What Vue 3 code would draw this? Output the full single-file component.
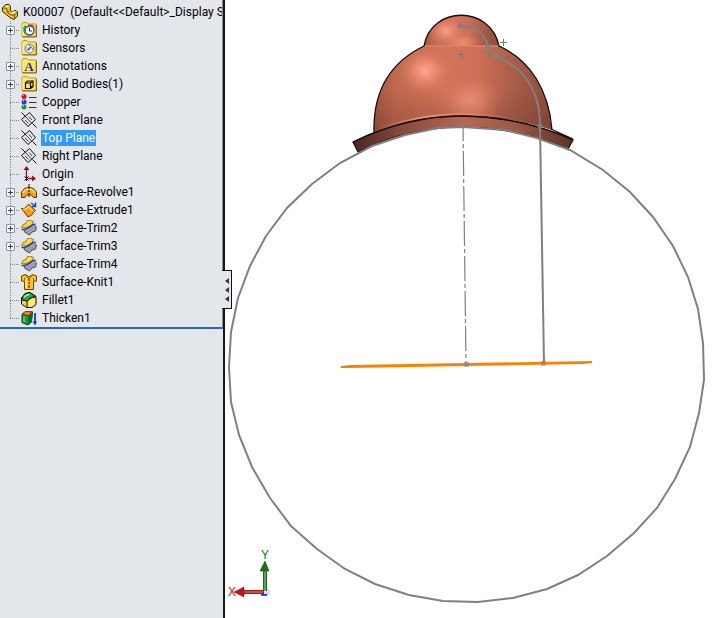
<script setup>
import { ref } from 'vue'

const features = [
  { name: 'History', icon: 'history', expandable: true },
  { name: 'Sensors', icon: 'sensors' },
  { name: 'Annotations', icon: 'annotations', expandable: true },
  { name: 'Solid Bodies(1)', icon: 'bodies', expandable: true },
  { name: 'Copper', icon: 'material' },
  { name: 'Front Plane', icon: 'plane' },
  { name: 'Top Plane', icon: 'plane' },
  { name: 'Right Plane', icon: 'plane' },
  { name: 'Origin', icon: 'origin' },
  { name: 'Surface-Revolve1', icon: 'revolve', expandable: true },
  { name: 'Surface-Extrude1', icon: 'extrude', expandable: true },
  { name: 'Surface-Trim2', icon: 'trim', expandable: true },
  { name: 'Surface-Trim3', icon: 'trim', expandable: true },
  { name: 'Surface-Trim4', icon: 'trim' },
  { name: 'Surface-Knit1', icon: 'knit' },
  { name: 'Fillet1', icon: 'fillet' },
  { name: 'Thicken1', icon: 'thicken' }
]

const folders = ['history', 'sensors', 'annotations', 'bodies']
const selected = ref('Top Plane')
</script>

<template>
  <div class="workspace">
    <aside class="panel">
      <nav class="tree" aria-label="Feature tree">
        <div class="root">
          <svg class="icon" viewBox="0 0 16 16" aria-hidden="true">
            <path d="M.5 3.500 4 .5h3l1.500 2v4l2 1.500 2-1.500h1.500l1.500 1.500v4L12 15.500 8.500 14 .5 7.500z" fill="#f2c51c" stroke="#3d2c00" stroke-linejoin="round" />
            <path d="M1.500 4 4.500 1.500H7L5 4z M8.500 10l3-2.500h2.500l-2 2.500z" fill="#fff3a0" />
            <path d="M1 4h3.500l1 4.500L9 11h3.500L15 8.500M12.500 11v4M5.500 8.500 7.500 7" fill="none" stroke="#6b4d00" />
          </svg>
          <span class="label">K00007&nbsp; (Default&lt;&lt;Default&gt;_Display S</span>
        </div>
        <ul class="features">
          <li v-for="f in features" :key="f.name" class="feature">
            <span class="branch">
              <button v-if="f.expandable" class="expander" type="button" :aria-label="'Expand ' + f.name"></button>
            </span>
            <svg class="icon" viewBox="0 0 16 16" aria-hidden="true">
              <g v-if="folders.includes(f.icon)">
                <path d="M1 3V1.500L2 .5h4L7.500 2H15v12.500H1z" fill="#ffe35c" stroke="#c79a16" />
                <path d="M2 13.500V3.500h12" fill="none" stroke="#fff6b0" />
                <path d="M1.500 15h14V3" fill="none" stroke="#8c6708" />
              </g>
              <g v-if="f.icon === 'history'">
                <circle cx="8.500" cy="8.500" r="4.500" fill="#fff" stroke="#2c50a8" stroke-width="1.500" />
                <path d="M4.500 11A5 5 0 0 1 4 5.500" fill="none" stroke="#16a038" stroke-width="2" />
                <path d="M1.500 6.500 4 3l3 3z" fill="#18b040" />
                <path d="M7 3.500q4-1.500 6 2" fill="none" stroke="#d33" stroke-width="1.500" />
                <path d="M8.500 5.500V9H11" fill="none" stroke="#223" />
              </g>
              <g v-else-if="f.icon === 'sensors'">
                <circle cx="8.500" cy="8.500" r="4.500" fill="#e8f1f7" stroke="#68798a" />
                <path d="m6.500 10.500 4-4M5.500 8h1M8.500 5v1M11 9h1" stroke="#174f79" stroke-width="1.200" />
              </g>
              <text v-else-if="f.icon === 'annotations'" x="8" y="13" class="glyph">A</text>
              <g v-else-if="f.icon === 'bodies'" fill="none" stroke="#111" stroke-width="1.200">
                <path d="M4.500 7h5v5.500h-5zM6.500 5h5.500v5.500H9.500M4.500 7l2-2M9.500 7 12 5M9.500 12.500l2.500-2" />
              </g>
              <g v-else-if="f.icon === 'material'">
                <circle cx="3" cy="2.500" r="2.500" fill="#e01020" />
                <circle cx="3" cy="8" r="2.500" fill="#2838d0" />
                <circle cx="3" cy="13" r="2.500" fill="#169040" />
                <path d="M2 1.500h1M2 7h1M2 12h1" stroke="#fff" />
                <path d="M8 3.500h7.500M8 8.500h7.500M8 13.500h7.500" stroke="#333" />
              </g>
              <g v-else-if="f.icon === 'plane'" fill="none" stroke="#111">
                <path d="M8.500.5 14.500 7.500 7 14.500.5 7.500zM.5.5l4 4M11.500 11.500l4 4" />
                <path d="M4.500 4.500l6.500 7M8 4.500 11 8M4 8l3.500 3.500" stroke-width=".8" />
              </g>
              <g v-else-if="f.icon === 'origin'">
                <path d="M5.500 11V2M7 12.500h6" stroke="#a00c18" stroke-width="1.300" />
                <path d="m5.500 0 3 4h-6zM15 12.500l-4-3v6z" fill="#a00c18" />
                <path d="m3.500 10.500 4 4m0-4-4 4M5.500 10v5" stroke="#111" />
              </g>
              <g v-else-if="f.icon === 'revolve'">
                <path d="M.5 9Q2 3.500 8 3.500T15.500 9v4.500h-3Q11 10.500 8 10.500T4 13.500H.5z" fill="#f5a416" stroke="#5e3200" />
                <path d="M2 9q2-4 6-4t6 4" fill="none" stroke="#ffe06a" stroke-width="1.500" />
                <path d="M8 0v5M8 6v2M8 9v4" stroke="#111" />
              </g>
              <g v-else-if="f.icon === 'extrude'">
                <path d="M.5 6.500q4 1 5.500-3l2-1 6.500 6-2 2q-1 3-5.500 4.500z" fill="#f59c12" stroke="#6b3b00" />
                <path d="M2 7.500q4 0 5-3l4.500 4" fill="none" stroke="#ffd652" stroke-width="1.500" />
                <path d="m10 1 4 3M14.500.5V4.500H11" fill="none" stroke="#1a48d8" stroke-width="1.500" />
              </g>
              <g v-else-if="f.icon === 'trim'">
                <path d="M3 10 8 7.500l4-3.500 3.500 3-1 4-3.500 1-2.500 3L3.500 12z" fill="#9da1a8" stroke="#4b5057" />
                <path d="m.5 8 1.500-3.500 3-1 1.500-3 2.500-.5 3.500 1.500L11 5 5.500 7.500z" fill="#fbd82f" stroke="#806000" stroke-width=".8" />
                <path d="M.5 9.500Q4 10 7 8t5-3.500l3-.5" fill="none" stroke="#2a2fd0" stroke-width="1.200" />
                <path d="m6 3.500 2.500-1.500" stroke="#fff6a8" />
              </g>
              <g v-else-if="f.icon === 'knit'">
                <path d="m.5 2 4-1.500L8 3l3.500-2.500 4 1.500v5l-3 .5v8h-9v-8l-3-.5z" fill="#f8c51d" stroke="#5f4300" />
                <path d="m4.500 1 3.500 4 3.500-4M3.500 4v4M12.500 4v4" fill="none" stroke="#9b6500" />
                <path d="M8 5v2M8 8v2M8 11v3" stroke="#e34c0d" stroke-width="2" />
                <path d="M5 5v9" stroke="#fff06e" stroke-width="1.500" />
              </g>
              <g v-else-if="f.icon === 'fillet'">
                <path d="M.5 6 4 1.500 9 .5l6 4v8L11 15.500H5.500L.5 12z" fill="#f9d334" stroke="#111" />
                <path d="M.5 8Q2 1 9 .5l6 4Q9 5 6 9z" fill="#20a843" stroke="#111" />
                <path d="M3 5.500Q5 2.500 8.500 2.500" fill="none" stroke="#9af0a4" stroke-width="1.500" />
                <path d="M6 9q3-4 9-4.500M6 9v6.500" fill="none" stroke="#111" />
                <path d="M7.500 9.500q2.500-3 6.500-3.500v6l-3.500 2.500h-3z" fill="#ffed70" />
              </g>
              <g v-else>
                <path d="M1 4.500 4.500 2h7l-1 10-3.500 3L1 12.500z" fill="#1d9b3a" stroke="#0b3015" />
                <path d="m1 4 3.500-2.500 7 .5-4 3.500z" fill="#f78c1c" stroke="#8c2b00" />
                <path d="m7 6 4-3v9l-4 2.500z" fill="#0d6b25" />
                <path d="M3 6.500V12" stroke="#6fdb78" stroke-width="1.500" />
                <path d="M14 3v9" stroke="#174fd2" stroke-width="2" />
                <path d="m11.500 11.500 2.500 4 2-4z" fill="#123fb0" />
              </g>
            </svg>
            <a href="#" class="label" :class="{ selected: selected === f.name }" @click.prevent="selected = f.name">{{ f.name }}</a>
          </li>
        </ul>
      </nav>
      <button class="collapse" type="button" aria-label="Collapse panel">
        <svg viewBox="0 0 4 26" aria-hidden="true">
          <path d="M4 1v6L0 4zM4 10v6l-4-3zM4 19v6l-4-3z" fill="#33363b" />
        </svg>
      </button>
    </aside>

    <main class="viewport">
      <svg class="model" viewBox="225 0 494 618" preserveAspectRatio="xMinYMin meet" role="img" aria-label="Copper dome model">
        <defs>
          <linearGradient id="body" x1="0" x2="1" y1="0" y2="0">
            <stop offset="0" stop-color="#a4553f" />
            <stop offset=".12" stop-color="#c0694f" />
            <stop offset=".4" stop-color="#d3745a" />
            <stop offset=".6" stop-color="#cb6f56" />
            <stop offset=".8" stop-color="#a65c48" />
            <stop offset="1" stop-color="#8c4c3b" />
          </linearGradient>
          <linearGradient id="shade" x1="0" x2="0" y1="0" y2="1">
            <stop offset=".5" stop-color="#6b3326" stop-opacity="0" />
            <stop offset="1" stop-color="#6b3326" stop-opacity=".4" />
          </linearGradient>
          <linearGradient id="rim" x1="0" x2="1" y1="0" y2="0">
            <stop offset="0" stop-color="#4b261e" />
            <stop offset=".2" stop-color="#84473a" />
            <stop offset=".5" stop-color="#b76852" />
            <stop offset=".75" stop-color="#9b5746" />
            <stop offset="1" stop-color="#5e3126" />
          </linearGradient>
          <radialGradient id="glow">
            <stop offset="0" stop-color="#ffa58b" />
            <stop offset=".4" stop-color="#f3937a" stop-opacity=".75" />
            <stop offset="1" stop-color="#dd7c61" stop-opacity="0" />
          </radialGradient>
          <linearGradient id="seam" x1="0" x2="1" y1="0" y2="0">
            <stop offset="0" stop-color="#f0906f" stop-opacity="0" />
            <stop offset=".3" stop-color="#f0906f" />
            <stop offset="1" stop-color="#f0906f" stop-opacity="0" />
          </linearGradient>
          <clipPath id="dome-clip">
            <path d="M374 132C373 88 393 61 424 46L500 46C530 60 549 90 552 130Q510 116 462 116T374 132" />
          </clipPath>
          <clipPath id="cap-clip">
            <path d="M424 46C431 5 491 5 499 46z" />
          </clipPath>
        </defs>

        <path d="M374 132C373 88 393 61 424 46L500 46C530 60 549 90 552 130Q510 116 462 116T374 132" fill="url(#body)" />
        <path d="M374 132C373 88 393 61 424 46L500 46C530 60 549 90 552 130Q510 116 462 116T374 132" fill="url(#shade)" />
        <g clip-path="url(#dome-clip)">
          <ellipse cx="425" cy="71" rx="26" ry="23" fill="url(#glow)" />
          <ellipse cx="470" cy="101" rx="32" ry="25" fill="url(#glow)" opacity=".6" />
          <path d="M380 128Q424 114 462 114Q490 114 520 120" fill="none" stroke="url(#seam)" stroke-width="2" />
        </g>
        <path d="M424 46C431 5 491 5 499 46z" fill="url(#body)" />
        <g clip-path="url(#cap-clip)">
          <ellipse cx="446" cy="31" rx="18" ry="15" fill="url(#glow)" opacity=".85" />
          <ellipse cx="463" cy="43" rx="18" ry="11" fill="url(#glow)" opacity=".6" />
        </g>
        <path d="M425 46H498" stroke="#dc806a" stroke-width="1.500" />
        <path d="M374 132C373 88 393 61 424 46C431 5 491 5 499 46C530 60 549 90 552 130" fill="none" stroke="#111" stroke-width="1.300" />

        <path d="M353 142Q406 116 462 116Q524 117 573 140L568 149Q522 128 462 127Q404 128 358 152z" fill="url(#rim)" stroke="#111" stroke-width="1.200" />
        <path d="M353 142Q406 116 462 116Q524 117 573 140M551 129 573 139" fill="none" stroke="#111" stroke-width="1.300" />

        <polygon
          points="229,367 231,332 238,298 250,266 266,236 287,208 312,184 340,163 372,146 405,135 438,128 463,127 505,130 537,138 570,150 603,170 630,192 653,217 673,246 688,277 698,309 703,343 704,380 699,413 690,447 675,479 657,508 634,533 607,556 578,575 547,589 513,598 478,602 443,601 409,595 375,584 345,569 317,549 291,526 270,498 252,467 239,435 231,402"
          fill="none" stroke="#808080" stroke-width="2" />

        <path d="M463 124 466 364" fill="none" stroke="#808080" stroke-width="1.200" stroke-dasharray="25 3 4 3" stroke-dashoffset="8" />
        <path d="M460 26C477 27 484 33 488 46Q491 54 497 57C527 69 540 92 540 126" fill="none" stroke="#808080" stroke-width="2" />
        <path d="M540 126 544 364" stroke="#808080" stroke-width="2" />
        <g fill="#808080">
          <circle cx="460" cy="26" r="2.500" />
          <circle cx="488" cy="46" r="2.500" />
          <circle cx="497" cy="57" r="2.500" />
          <circle cx="540" cy="126" r="2.500" />
        </g>
        <path d="M458 54.500h7M461.500 51v7M500 42.500h7M503.500 39v7M485 52l6 2M489.500 51v7" stroke="#777" stroke-width="1" />

        <path d="M341 366 350 365 592 361V363L583 364 350 368 341 368z" fill="#ff8000" />
        <path d="M464 362h5v5h-5zM541 361h5v5h-5z" fill="#777" opacity=".5" />

        <g>
          <circle cx="266" cy="592" r="4" fill="#dcdcff" />
          <path d="M262 590v5h5" fill="none" stroke="#00f" stroke-width="1.500" />
          <path d="M243 592h21" stroke="#b01818" stroke-width="4" />
          <path d="M243 592h20" stroke="#f08080" />
          <path d="m234 592 10-5v10z" fill="#c01818" stroke="#701010" stroke-width=".5" />
          <path d="M265 569v22" stroke="#176a17" stroke-width="4" />
          <path d="M265 570v21" stroke="#9ed89e" />
          <path d="m265 561-5 10h9z" fill="#177417" stroke="#0b400b" stroke-width=".5" />
          <text x="232" y="596" class="axis axis-x">X</text>
          <text x="265" y="559" class="axis axis-y">Y</text>
        </g>
      </svg>
    </main>
  </div>
</template>

<style>
body {
  margin: 0;
  background: #fff;
}
</style>

<style scoped>
.workspace {
  display: flex;
  height: 100vh;
  overflow: hidden;
  font-family: Roboto, "Open Sans", sans-serif;
  font-size: 12px;
  line-height: 16px;
  color: #000;
}

.panel {
  position: relative;
  box-sizing: border-box;
  flex: 0 0 225px;
  min-width: 0;
  border-right: 2px solid #17171a;
  background: #e3e6eb;
}

.tree {
  padding-top: 3px;
  border-right: 1px solid #8b8d91;
  border-bottom: 2px solid #2868c0;
  overflow: hidden;
}

.root {
  display: flex;
  align-items: center;
  gap: 5px;
  height: 18px;
  padding-left: 2px;
}

.features {
  margin: 0;
  padding: 0;
  list-style: none;
}

.feature {
  display: flex;
  align-items: center;
  height: 18px;
  padding-left: 6px;
}

.branch {
  display: flex;
  align-items: center;
  align-self: stretch;
  width: 15px;
  background:
    repeating-linear-gradient(to bottom, #808488 0 1px, transparent 1px 2px) 4px 0 / 1px 100% no-repeat,
    repeating-linear-gradient(to right, #808488 0 1px, transparent 1px 2px) 4px 9px / 10px 1px no-repeat;
}

.feature:last-child .branch {
  background-size: 1px 10px, 10px 1px;
}

.expander {
  width: 9px;
  height: 9px;
  padding: 0;
  border: 1px solid #8e9299;
  border-radius: 1px;
  background:
    linear-gradient(#28458c, #28458c) center / 5px 1px no-repeat,
    linear-gradient(#28458c, #28458c) center / 1px 5px no-repeat,
    #f7f8fa;
}

.icon {
  flex: none;
  width: 16px;
  height: 16px;
}

.glyph {
  font: bold 13px "Liberation Serif", serif;
  text-anchor: middle;
  fill: #1238b8;
}

.label {
  white-space: nowrap;
  color: inherit;
  text-decoration: none;
}

.feature .label {
  margin-left: 4px;
  padding: 0 1px;
}

.feature .selected {
  background: #3399ff;
  color: #fff;
}

.collapse {
  position: absolute;
  top: 270px;
  right: -9px;
  display: flex;
  align-items: center;
  justify-content: center;
  box-sizing: border-box;
  width: 10px;
  height: 39px;
  padding: 0;
  border: 1px solid #111;
  border-left: 0;
  background: #e3e6eb;
}

.collapse svg {
  width: 4px;
  height: 26px;
}

.viewport {
  flex: 1;
  min-width: 0;
}

.model {
  display: block;
  width: 100%;
  height: 100%;
}

.axis {
  font: 12px "Liberation Sans", sans-serif;
  text-anchor: middle;
}

.axis-x {
  fill: #f00;
}

.axis-y {
  fill: #008000;
}
</style>
